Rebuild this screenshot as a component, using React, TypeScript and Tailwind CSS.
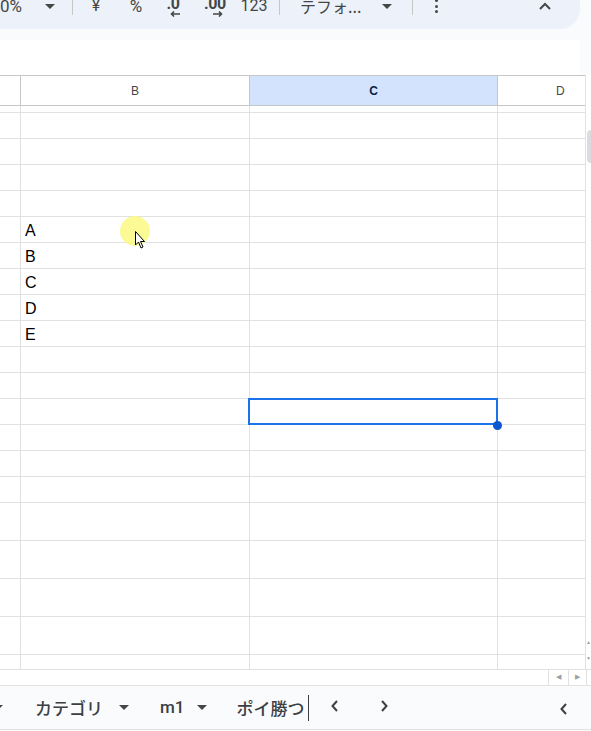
import React from "react";

const rowHeights = [
  7, 26, 26, 26, 26, 26, 26, 26, 26, 26, 26, 26, 26, 26, 26, 26, 38, 38, 38, 38,
];

const cellText: Record<number, string> = { 5: "A", 6: "B", 7: "C", 8: "D", 9: "E" };

function Caret({ className = "" }: { className?: string }) {
  return (
    <svg width="10" height="5" viewBox="0 0 10 5" className={className}>
      <path d="M0 0h10L5 5z" fill="#444746" />
    </svg>
  );
}

function Sep() {
  return <div className="h-[17px] w-px bg-[#c4c7c5]" />;
}

function Toolbar() {
  return (
    <div className="h-[29px] w-[580px] overflow-hidden rounded-br-[20px] bg-[#edf2fa] text-[#444746]">
      <div className="flex h-[12px] items-center font-['Roboto',sans-serif] text-[17px]">
        <div className="w-[40px] leading-none">0%</div>
        <div className="flex w-[20px] justify-center">
          <Caret />
        </div>
        <div className="flex w-[24px] justify-center">
          <Sep />
        </div>
        <div className="w-[24px] text-center text-[16px] leading-none">¥</div>
        <div className="ml-[14px] w-[28px] text-center leading-none">%</div>
        {/* decrease decimal */}
        <div className="ml-[10px] flex w-[26px] flex-col items-center">
          <span className="text-[16px] font-bold leading-none tracking-tight">.0</span>
          <svg width="10" height="6" viewBox="0 0 10 6" className="-mt-[1px] ml-[4px]">
            <path d="M10 3H2M4 0.5L1.5 3L4 5.5" stroke="#444746" strokeWidth="1.6" fill="none" />
          </svg>
        </div>
        {/* increase decimal */}
        <div className="ml-[14px] flex w-[30px] flex-col items-center">
          <span className="text-[16px] font-bold leading-none tracking-tight">.00</span>
          <svg width="10" height="6" viewBox="0 0 10 6" className="-mt-[1px] ml-[6px]">
            <path d="M0 3H8M6 0.5L8.5 3L6 5.5" stroke="#444746" strokeWidth="1.6" fill="none" />
          </svg>
        </div>
        <div className="ml-[8px] w-[32px] text-center text-[16px] leading-none">123</div>
        <div className="flex w-[18px] justify-center">
          <Sep />
        </div>
        <div className="ml-[12px] w-[72px] font-['Noto_Sans_CJK_JP',sans-serif] text-[16px] leading-none">
          テフォ...
        </div>
        <div className="flex w-[30px] justify-center">
          <Caret />
        </div>
        <div className="flex w-[20px] justify-center">
          <Sep />
        </div>
        <div className="ml-[3px] flex w-[22px] flex-col items-center gap-[2.5px]">
          <span className="h-[3px] w-[3px] rounded-full bg-[#444746]" />
          <span className="h-[3px] w-[3px] rounded-full bg-[#444746]" />
          <span className="h-[3px] w-[3px] rounded-full bg-[#444746]" />
        </div>
        <div className="ml-[83px] flex w-[30px] justify-center">
          <svg width="12" height="8" viewBox="0 0 12 8">
            <path d="M1 7L6 2L11 7" stroke="#444746" strokeWidth="2" fill="none" />
          </svg>
        </div>
      </div>
    </div>
  );
}

export default function App() {
  return (
    <div className="relative flex h-[731px] w-[591px] flex-col overflow-hidden bg-[#f9fbfd] font-['Liberation_Sans',Arial,sans-serif]">
      <Toolbar />
      <div className="h-[11px]" />
      <div className="h-[35px] w-[580px] bg-white" />

      {/* grid */}
      <div className="relative flex bg-white">
        <div className="flex flex-1 flex-col">
          {/* column headers */}
          <div className="box-border flex h-[31px] border-y border-[#c4c7c5] text-[12px] text-[#444746]">
            <div className="w-[21px] border-r border-[#c4c7c5]" />
            <div className="flex w-[229px] items-center justify-center border-r border-[#c4c7c5]">
              B
            </div>
            <div className="flex w-[248px] items-center justify-center border-r border-[#c4c7c5] bg-[#d3e3fd] font-bold text-[#0b1f44]">
              C
            </div>
            <div className="flex flex-1 items-center pl-[58px]">D</div>
          </div>
          {rowHeights.map((h, i) => (
            <div
              key={i}
              className="box-border flex border-b border-[#e1e1e1]"
              style={{ height: h }}
            >
              <div className="w-[21px] border-r border-[#e1e1e1]" />
              <div className="flex w-[229px] items-end border-r border-[#e1e1e1] pb-[3px] pl-[4px] text-[16px] leading-none text-black">
                {cellText[i] ?? ""}
              </div>
              <div className="w-[248px] border-r border-[#e1e1e1]" />
              <div className="flex-1" />
            </div>
          ))}
          <div className="flex h-[14px]">
            <div className="w-[21px] border-r border-[#e1e1e1]" />
            <div className="w-[229px] border-r border-[#e1e1e1]" />
            <div className="w-[248px] border-r border-[#e1e1e1]" />
          </div>
        </div>

        {/* vertical scrollbar */}
        <div className="flex w-[6px] flex-col border-l border-[#e1e1e1]">
          <div className="h-[55px]" />
          <div className="ml-[1px] h-[33px] w-[5px] rounded-l-[4px] bg-[#dadce0]" />
          <div className="flex-1" />
          <div className="mb-[8px] flex flex-col items-center gap-[11px] text-[5px] leading-none text-[#9aa0a6]">
            <span>▲</span>
            <span>▼</span>
          </div>
        </div>

        {/* selected cell */}
        <div className="absolute left-[248px] top-[323px] h-[27px] w-[250px] border-2 border-[#1a73e8]" />
        <div className="absolute left-[492.5px] top-[345.5px] h-[9px] w-[9px] rounded-full bg-[#0b57d0]" />

        {/* pointer highlight */}
        <div className="absolute left-[120px] top-[141px] h-[30px] w-[30px] rounded-full bg-[#fbf98a]/90" />
        <svg
          className="absolute left-[135px] top-[156px]"
          width="12"
          height="19"
          viewBox="0 0 12 19"
        >
          <path d="M0.5 0.5V14L3.5 11L6 17L8 16L5.5 10.5H9.5Z" fill="#fff" stroke="#000" strokeWidth="1" />
        </svg>
      </div>

      {/* horizontal scroll strip */}
      <div className="flex h-[16px] border-t border-[#e1e1e1] bg-white">
        <div className="flex-1" />
        <div className="flex h-full w-[20px] items-center justify-center border-l border-[#e1e1e1] text-[7px] text-[#9aa0a6]">
          ◀
        </div>
        <div className="flex h-full w-[19px] items-center justify-center border-x border-[#e1e1e1] text-[7px] text-[#9aa0a6]">
          ▶
        </div>
        <div className="w-[4px]" />
      </div>

      {/* sheet tabs */}
      <div className="box-border flex h-[45px] items-center border-y border-[#e1e3e1] bg-[#f9fbfd] font-['Roboto','Noto_Sans_CJK_JP',sans-serif] text-[17px] font-medium text-[#3c4043]">
        <Caret className="-ml-[7px]" />
        <span className="ml-[32px] font-['Noto_Sans_CJK_JP',sans-serif]">カテゴリ</span>
        <Caret className="ml-[16px]" />
        <span className="ml-[31px]">m1</span>
        <Caret className="ml-[13px]" />
        <div className="ml-[29px] h-[26px] w-[73px] overflow-hidden whitespace-nowrap border-r border-[#3c4043] font-['Noto_Sans_CJK_JP',sans-serif] leading-[26px]">
          ポイ勝つ
        </div>
        <svg width="10" height="14" viewBox="0 0 10 14" className="ml-[21px] -mt-[4px]">
          <path d="M7 2L2.5 7L7 12" stroke="#3c4043" strokeWidth="2" fill="none" />
        </svg>
        <svg width="10" height="14" viewBox="0 0 10 14" className="ml-[39px] -mt-[4px]">
          <path d="M3 2L7.5 7L3 12" stroke="#3c4043" strokeWidth="2" fill="none" />
        </svg>
        <div className="flex-1" />
        <svg width="10" height="14" viewBox="0 0 10 14" className="mr-[22px] mt-[2px]">
          <path d="M7 2L2.5 7L7 12" stroke="#3c4043" strokeWidth="2" fill="none" />
        </svg>
      </div>
    </div>
  );
}
